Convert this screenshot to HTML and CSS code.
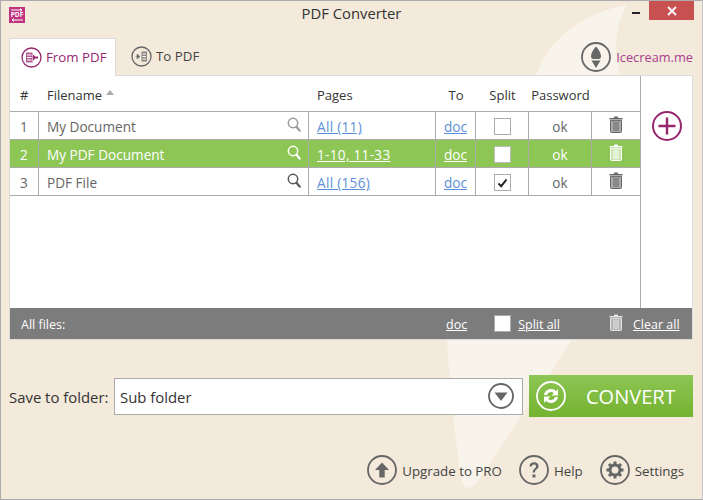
FILE: index.html
```html
<!DOCTYPE html>
<html lang="en">
<head>
<meta charset="utf-8">
<title>PDF Converter</title>
<link rel="stylesheet" href="styles.css">
</head>
<body>
<svg width="0" height="0" class="defs">
  <symbol id="trash" viewBox="0 0 14 17">
    <path d="M5 .5h4v1.500h4.500v1.600H.5V2H5z" fill="currentColor"/>
    <path d="M1.500 4.600h11V15.500a1 1 0 0 1-1 1h-9a1 1 0 0 1-1-1z" fill="currentColor" opacity=".55"/>
    <path d="M1.500 4.600h11V15.500a1 1 0 0 1-1 1h-9a1 1 0 0 1-1-1zM5 6v9M7 6v9M9 6v9" fill="none" stroke="currentColor" stroke-width="1"/>
  </symbol>
  <symbol id="glass" viewBox="0 0 14 15">
    <circle cx="6" cy="6" r="4.700" fill="none" stroke="currentColor" stroke-width="1.500"/>
    <path d="M9.500 9.800l3.200 3.800" stroke="currentColor" stroke-width="2.200" stroke-linecap="round"/>
  </symbol>
</svg>
<div class="window">
  <svg class="backdrop" width="703" height="500" viewBox="0 0 703 500">
    <path d="M627 5C585 12 545 40 535 80L447 340C450 390 457 450 461 478C463 490 472 491 478 481L572 340L640 120C622 90 604 45 627 5Z" fill="#f8f4ec"/>
  </svg>
  <header class="titlebar">
    <div class="logo">
      <svg width="16" height="16" viewBox="0 0 16 16"><rect width="16" height="16" fill="#c0327f"/><path d="M2 3h11M11 1.500L13 3l-2 1.500M14 13H3M5 11.500L3 13l2 1.500" fill="none" stroke="#fff" stroke-width="1"/></svg>
      <span class="logo-text">PDF</span>
    </div>
    <div class="title">PDF Converter</div>
    <div class="controls">
      <span class="minimize"></span>
      <span class="close">
        <svg width="10" height="10" viewBox="0 0 10 10"><path d="M1 1l8 8M9 1L1 9" stroke="#fff" stroke-width="1.800"/></svg>
      </span>
    </div>
  </header>
  <div class="tabbar">
    <div class="tab tab-active">
      <svg class="tab-icon" width="21" height="21" viewBox="0 0 21 21"><circle cx="10.500" cy="10.500" r="9.500" fill="none" stroke="currentColor" stroke-width="1.300"/><rect x="5" y="5.500" width="6.500" height="10" fill="currentColor" opacity=".75"/><path d="M6 8h4.500M6 10.500h4.500M6 13h4.500" stroke="#fff" stroke-width="1"/><path d="M12 7.500l3.500 3-3.500 3z" fill="currentColor"/><rect x="15" y="9.500" width="2" height="2" fill="currentColor"/></svg>
      <span>From PDF</span>
    </div>
    <div class="tab tab-plain">
      <svg class="tab-icon" width="21" height="21" viewBox="0 0 21 21"><circle cx="10.500" cy="10.500" r="9.500" fill="none" stroke="currentColor" stroke-width="1.300"/><rect x="10.500" y="5.500" width="5.500" height="10" fill="currentColor" opacity=".75"/><path d="M11.500 8h3.500M11.500 10.500h3.500M11.500 13h3.500" stroke="#fff" stroke-width="1"/><path d="M4.500 10.500h2M6 8l3 2.500-3 2.500z" fill="currentColor" stroke="currentColor" stroke-width=".5"/></svg>
      <span>To PDF</span>
    </div>
    <a class="brand">
      <svg width="30" height="30" viewBox="0 0 30 30"><circle cx="15" cy="15" r="14" fill="none" stroke="#666" stroke-width="1.800"/><path d="M15 4.500C12 8 10 11 10 14.500c0 1.500 1 2.500 2 2.500h6c1 0 2-1 2-2.500C20 11 18 8 15 4.500z" fill="#666"/><path d="M10.500 18.500h9L15 26z" fill="#666"/></svg>
      <span>Icecream.me</span>
    </a>
  </div>
  <section class="panel">
    <div class="main">
      <div class="table">
        <div class="row head">
          <div class="cell c-num">#</div>
          <div class="cell c-name">Filename <span class="sort"></span></div>
          <div class="cell c-pages">Pages</div>
          <div class="cell c-to">To</div>
          <div class="cell c-split">Split</div>
          <div class="cell c-pass">Password</div>
          <div class="cell c-del"></div>
        </div>
        <div class="row">
          <div class="cell c-num">1</div>
          <div class="cell c-name"><span class="fname">My Document</span><svg class="glass glass-light" width="14" height="15"><use href="#glass"/></svg></div>
          <div class="cell c-pages"><a class="link">All (11)</a></div>
          <div class="cell c-to"><a class="link">doc</a></div>
          <div class="cell c-split"><span class="check"></span></div>
          <div class="cell c-pass">ok</div>
          <div class="cell c-del"><svg class="trash" width="14" height="17"><use href="#trash"/></svg></div>
        </div>
        <div class="row selected">
          <div class="cell c-num">2</div>
          <div class="cell c-name"><span class="fname">My PDF Document</span><svg class="glass" width="14" height="15"><use href="#glass"/></svg></div>
          <div class="cell c-pages"><a class="link">1-10, 11-33</a></div>
          <div class="cell c-to"><a class="link">doc</a></div>
          <div class="cell c-split"><span class="check"></span></div>
          <div class="cell c-pass">ok</div>
          <div class="cell c-del"><svg class="trash" width="14" height="17"><use href="#trash"/></svg></div>
        </div>
        <div class="row">
          <div class="cell c-num">3</div>
          <div class="cell c-name"><span class="fname">PDF File</span><svg class="glass" width="14" height="15"><use href="#glass"/></svg></div>
          <div class="cell c-pages"><a class="link">All (156)</a></div>
          <div class="cell c-to"><a class="link">doc</a></div>
          <div class="cell c-split"><span class="check"><svg width="11" height="10" viewBox="0 0 11 10"><path d="M1.500 5.500L4.200 8.200 9.500 1.500" fill="none" stroke="#222" stroke-width="2"/></svg></span></div>
          <div class="cell c-pass">ok</div>
          <div class="cell c-del"><svg class="trash" width="14" height="17"><use href="#trash"/></svg></div>
        </div>
      </div>
      <div class="side">
        <svg width="30" height="30" viewBox="0 0 30 30"><circle cx="15" cy="15" r="14" fill="none" stroke="#98266f" stroke-width="2"/><path d="M15 6.500v17M6.500 15h17" stroke="#98266f" stroke-width="2.400"/></svg>
      </div>
    </div>
    <footer class="allfiles">
      <span class="all-label">All files:</span>
      <a class="foot-doc">doc</a>
      <span class="check foot-check"></span>
      <a class="foot-split">Split all</a>
      <svg class="foot-trash" width="14" height="17"><use href="#trash"/></svg>
      <a class="foot-clear">Clear all</a>
    </footer>
  </section>
  <div class="saverow">
    <label class="save-label">Save to folder:</label>
    <div class="folder">
      <span>Sub folder</span>
      <svg width="26" height="26" viewBox="0 0 26 26"><circle cx="13" cy="13" r="12" fill="#fff" stroke="#666" stroke-width="1.800"/><path d="M6.500 9.500h13L13 18z" fill="#666"/></svg>
    </div>
    <button class="convert">
      <svg width="30" height="30" viewBox="0 0 30 30"><circle cx="15" cy="15" r="14" fill="none" stroke="#fff" stroke-width="1.800"/><path d="M8 14c.6-3.600 3.500-6 7-6 2 0 3.800.8 5 2.200L22 8v6.500h-6.500l2.300-2.300c-.7-.8-1.700-1.200-2.800-1.200-1.800 0-3.300 1.200-3.900 3zM22 16c-.6 3.600-3.500 6-7 6-2 0-3.800-.8-5-2.200L8 22v-6.500h6.500l-2.300 2.300c.7.800 1.700 1.200 2.800 1.200 1.800 0 3.300-1.200 3.900-3z" fill="#fff"/></svg>
      <span>CONVERT</span>
    </button>
  </div>
  <nav class="bottom">
    <a class="action action-up">
      <svg width="30" height="30" viewBox="0 0 30 30"><circle cx="15" cy="15" r="14" fill="none" stroke="#666" stroke-width="1.800"/><path d="M15 7.500l7 7.500h-4.300v7.500h-5.400V15H8z" fill="#666"/></svg>
      <span>Upgrade to PRO</span>
    </a>
    <a class="action action-help">
      <svg width="30" height="30" viewBox="0 0 30 30"><circle cx="15" cy="15" r="14" fill="none" stroke="#666" stroke-width="1.800"/><path d="M10.500 11.500c0-2.800 2-4.200 4.600-4.200 2.700 0 4.500 1.500 4.500 3.800 0 3.400-3.700 3.300-3.700 6.400h-2.300c0-4 3.400-4 3.400-6.300 0-1-.8-1.700-2-1.700-1.300 0-2.100.8-2.200 2z" fill="#666"/><rect x="13.500" y="19.500" width="3" height="3" fill="#666"/></svg>
      <span>Help</span>
    </a>
    <a class="action">
      <svg width="30" height="30" viewBox="0 0 30 30"><circle cx="15" cy="15" r="14" fill="none" stroke="#666" stroke-width="1.800"/><circle cx="15" cy="15" r="5" fill="none" stroke="#666" stroke-width="3"/><path d="M15 6.500v3M15 20.500v3M6.500 15h3M20.500 15h3M9 9l2.100 2.100M18.900 18.900L21 21M21 9l-2.100 2.100M11.100 18.900L9 21" stroke="#666" stroke-width="3"/></svg>
      <span>Settings</span>
    </a>
  </nav>
</div>
</body>
</html>
```
FILE: styles.css
```css
* { box-sizing: border-box; }
html, body { margin: 0; padding: 0; }
body { font-family: "Open Sans", "Noto Sans", sans-serif; font-size: 12.5px; color: #333; }
.defs { position: absolute; }
.window { position: relative; width: 703px; height: 500px; border: 1px solid #ababab; border-right-color: #c8c8c8; background: #f3eadb; overflow: hidden; }
.backdrop { position: absolute; left: -1px; top: -1px; }
.titlebar { position: relative; height: 37px; display: grid; grid-template-columns: 1fr auto 1fr; }
.logo { position: relative; margin: 6px 0 0 8px; width: 16px; height: 16px; }
.logo svg { display: block; }
.logo-text { position: absolute; left: 0; right: 0; top: 3px; text-align: center; font-size: 6.5px; line-height: 10px; font-weight: 700; color: #fff; }
.title { margin-top: 3px; font-size: 14.800px; line-height: 18px; color: #333; }
.controls { display: flex; justify-content: flex-end; align-items: flex-start; margin-right: 8px; }
.minimize { width: 8px; height: 2px; background: #222; margin: 11px 9px 0 0; }
.close { width: 45px; height: 19px; background: #c75050; display: flex; align-items: center; justify-content: center; }
.tabbar { position: relative; height: 37px; display: flex; padding-left: 8px; padding-right: 9px; align-items: stretch; }
.tab { display: flex; align-items: center; gap: 4px; font-size: 13.300px; }
.tab span { margin-top: -2px; }
.tab-icon { flex: none; }
.tab-active { width: 107px; padding-left: 11px; background: #fff; border: 1px solid #dcdcdc; border-bottom: 0; color: #98266f; height: 38px; position: relative; z-index: 1; }
.tab-plain { margin-left: 15px; color: #666; }
.tab-plain span { color: #444; }
.brand { margin-left: auto; display: flex; align-items: center; gap: 5px; font-size: 12.800px; color: #a8408f; margin-top: 2px; margin-bottom: 2px; }
.panel { position: relative; margin-left: 8px; width: 684px; height: 265px; background: #fff; border: 1px solid #dcdcdc; display: flex; flex-direction: column; }
.main { flex: 1; display: flex; min-height: 0; }
.table { width: 631px; border-right: 1px solid #ababab; }
.row { display: grid; grid-template-columns: 29px 270px 127px 40px 53px 63px 48px; height: 28px; border-bottom: 1px solid #ababab; color: #666; font-size: 13.600px; }
.head { height: 36px; color: #333; font-size: 13px; }
.cell { display: flex; align-items: center; padding-top: 2px; border-right: 1px solid #ababab; min-width: 0; white-space: nowrap; }
.cell:last-child { border-right: 0; }
.head .cell { border-right: 0; }
.c-num { padding-left: 10px; }
.c-name { padding-left: 8px; justify-content: space-between; padding-right: 7px; }
.head .c-name { justify-content: flex-start; gap: 4px; }
.c-pages { padding-left: 8px; letter-spacing: .3px; }
.head .c-pages { letter-spacing: 0; }
.c-to, .c-split, .c-pass, .c-del { justify-content: center; }
.fname { color: #666; }
.sort { width: 0; height: 0; border-left: 4.500px solid transparent; border-right: 4.500px solid transparent; border-bottom: 5px solid #aaa; margin-top: -4px; }
.link { color: #5b8fd6; text-decoration: underline; }
.glass { margin-top: -5px; color: #555; }
.glass-light { color: #999; }
.trash { color: #666; margin-top: -4px; }
.check { width: 17px; height: 17px; background: #fff; border: 1px solid #ababab; display: flex; align-items: center; justify-content: center; }
.selected { background: #8dc655; color: #fff; }
.selected .fname, .selected .link, .selected .glass, .selected .trash { color: #fff; }
.selected .check { border-color: #bcbcbc; }
.side { flex: 1; display: flex; justify-content: center; padding-top: 35px; padding-left: 1px; }
.allfiles { height: 31px; padding-top: 2px; background: #7c7c7c; color: #fff; font-size: 12.5px; display: flex; align-items: center; padding-left: 11px; }
.allfiles a { color: #fff; text-decoration: underline; }
.all-label { width: 425px; }
.foot-check { margin-left: 27px; margin-top: -2px; }
.foot-split { margin-left: 7px; }
.foot-trash { margin-left: 49px; color: #e4e4e4; margin-top: -5px; }
.foot-clear { margin-left: 10px; }
.saverow { position: relative; display: flex; align-items: center; height: 42px; margin-top: 35px; padding-left: 8px; }
.save-label { width: 105px; padding-top: 2px; font-size: 14.900px; color: #333; }
.folder { width: 409px; height: 37px; background: #fff; border: 1px solid #ababab; display: flex; align-items: center; justify-content: space-between; padding: 0 8px 0 5px; font-size: 14.900px; color: #333; }
.folder span { padding-top: 2px; }
.convert { margin-left: 6px; width: 164px; height: 42px; border: 0; padding: 0 0 0 7px; display: flex; align-items: center; background: linear-gradient(#8dc655, #74b32f); color: #fff; font-family: inherit; font-size: 20px; }
.convert span { margin-left: 20px; }
.bottom { position: relative; display: flex; justify-content: flex-end; margin-top: 38px; padding-right: 18px; }
.action { display: flex; align-items: center; gap: 5px; font-size: 13.300px; color: #444; }
.action span { padding-top: 2px; }
.action-up { margin-right: 17px; }
.action-help { margin-right: 17px; }
```
